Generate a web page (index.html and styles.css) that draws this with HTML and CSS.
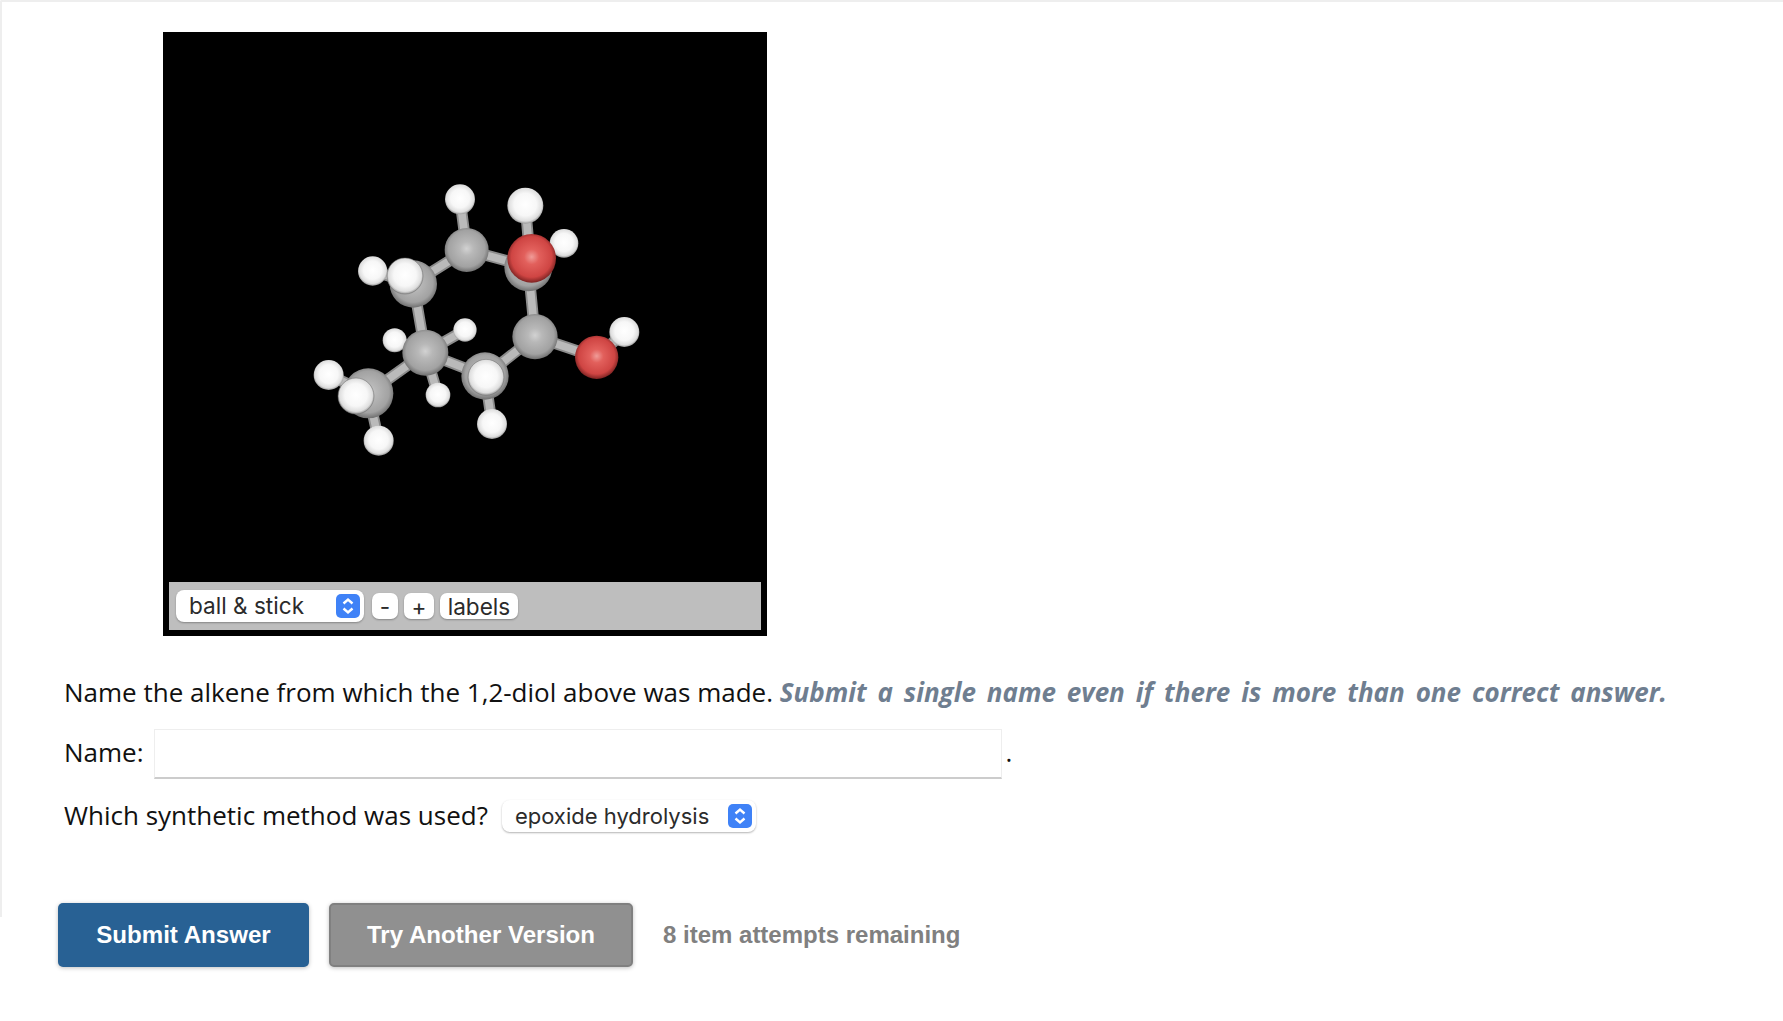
FILE: index.html
```html
<!DOCTYPE html>
<html lang="en">
<head>
<meta charset="utf-8">
<title>Question</title>
<link rel="stylesheet" href="styles.css">
</head>
<body>
<main class="panel">
  <div class="viewer">
    <div class="scene">
      <svg class="molecule" viewBox="0 0 1200 960" width="400" height="320" aria-hidden="true">
        <defs>
          <radialGradient id="gc" cx="0.5" cy="0.47" r="0.52"><stop offset="0" stop-color="#d2d2d2"/><stop offset="0.3" stop-color="#b8b8b8"/><stop offset="0.8" stop-color="#a2a2a2"/><stop offset="1" stop-color="#747474"/></radialGradient>
          <radialGradient id="gh" cx="0.5" cy="0.47" r="0.52"><stop offset="0" stop-color="#ffffff"/><stop offset="0.6" stop-color="#f7f7f7"/><stop offset="0.88" stop-color="#dedede"/><stop offset="1" stop-color="#a0a0a0"/></radialGradient>
          <radialGradient id="go" cx="0.5" cy="0.47" r="0.52"><stop offset="0" stop-color="#f09c98"/><stop offset="0.3" stop-color="#e2605c"/><stop offset="0.8" stop-color="#cf4543"/><stop offset="1" stop-color="#842625"/></radialGradient>
        </defs>
        <g class="bo">
          <path d="M540 118L560 270M736 137L750 295M852 250L755 295M278 333L400 370M400 370L560 270M560 270L745 320M745 320L765 530M400 370L436 578M436 578L265 700M436 578L615 648M615 648L765 530M765 530L950 592M950 592L1033 516M344 541L436 578M555 510L436 578M474 705L436 578M146 645L265 700M296 842L265 700M636 792L615 648"/>
        </g>
        <g class="bi">
          <path d="M540 118L560 270M736 137L750 295M852 250L755 295M278 333L400 370M400 370L560 270M560 270L745 320M745 320L765 530M400 370L436 578M436 578L265 700M436 578L615 648M615 648L765 530M765 530L950 592M950 592L1033 516M344 541L436 578M555 510L436 578M474 705L436 578M146 645L265 700M296 842L265 700M636 792L615 648"/>
        </g>
        <circle cx="344" cy="541" r="36" fill="url(#gh)"/>
        <circle cx="555" cy="510" r="35" fill="url(#gh)"/>
        <circle cx="474" cy="705" r="37" fill="url(#gh)"/>
        <circle cx="745" cy="322" r="72" fill="url(#gc)"/>
        <circle cx="560" cy="270" r="66" fill="url(#gc)"/>
        <circle cx="400" cy="372" r="71" fill="url(#gc)"/>
        <circle cx="436" cy="578" r="69" fill="url(#gc)"/>
        <circle cx="615" cy="648" r="71" fill="url(#gc)"/>
        <circle cx="765" cy="530" r="68" fill="url(#gc)"/>
        <circle cx="265" cy="700" r="75" fill="url(#gc)"/>
        <circle cx="540" cy="118" r="45" fill="url(#gh)"/>
        <circle cx="736" cy="137" r="54" fill="url(#gh)"/>
        <circle cx="852" cy="250" r="43" fill="url(#gh)"/>
        <circle cx="278" cy="333" r="44" fill="url(#gh)"/>
        <circle cx="1033" cy="516" r="45" fill="url(#gh)"/>
        <circle cx="146" cy="645" r="45" fill="url(#gh)"/>
        <circle cx="296" cy="842" r="45" fill="url(#gh)"/>
        <circle cx="636" cy="792" r="45" fill="url(#gh)"/>
        <circle class="front" cx="375" cy="348" r="54" fill="url(#gh)"/>
        <circle class="front" cx="228" cy="708" r="54" fill="url(#gh)"/>
        <circle class="front" cx="618" cy="652" r="54" fill="url(#gh)"/>
        <circle cx="755" cy="295" r="73" fill="url(#go)"/>
        <circle cx="950" cy="592" r="65" fill="url(#go)"/>
      </svg>
    </div>
    <div class="controls">
      <span class="select select-style"><span class="select-text">ball &amp; stick</span>
        <svg class="stepper" viewBox="0 0 24 24" aria-hidden="true"><rect width="24" height="24" rx="5"/><path d="M7.5 9.5L12 5.5L16.5 9.5M7.5 14.5L12 18.5L16.5 14.5"/></svg>
      </span>
      <button class="mini mini-minus" type="button">-</button>
      <button class="mini mini-plus" type="button">+</button>
      <button class="mini mini-labels" type="button">labels</button>
    </div>
  </div>
  <p class="line line-first">Name the alkene from which the 1,2-diol above was made. <em class="hint">Submit a single name even if there is more than one correct answer.</em></p>
  <p class="line line-name"><span class="label-name">Name:</span><input class="name-input" type="text" aria-label="Name"><span class="dot">.</span></p>
  <p class="line line-method"><span class="label-method">Which synthetic method was used?</span>
    <span class="select method-select">epoxide hydrolysis
      <svg class="stepper" viewBox="0 0 24 24" aria-hidden="true"><rect width="24" height="24" rx="5"/><path d="M7.5 9.5L12 5.5L16.5 9.5M7.5 14.5L12 18.5L16.5 14.5"/></svg>
    </span>
  </p>
</main>
<div class="actions">
  <button class="btn btn-submit" type="button">Submit Answer</button>
  <button class="btn btn-try" type="button">Try Another Version</button>
  <span class="attempts">8 item attempts remaining</span>
</div>
</body>
</html>
```
FILE: styles.css
```css
* { box-sizing: border-box; }
html, body { margin: 0; background: #fff; }
body { font-family: "Open Sans", "Noto Sans", sans-serif; color: #111; height: 1021px; overflow: hidden; }
.panel {
  height: 917px;
  padding: 32px 0 0 62px;
  border-top: 2px solid #eee;
  border-left: 2px solid #eee;
  border-top-left-radius: 2px;
}
.viewer { width: 604px; margin-left: 99px; margin-top: -2px; background: #000; padding: 6px; }
.scene { height: 544px; padding: 122px 0 0 111px; }
.molecule { display: block; }
.bo path { fill: none; stroke: #8c8c8c; stroke-width: 34; }
.bi path { fill: none; stroke: #bababa; stroke-width: 23; }
.front { stroke: #6a6a6a; stroke-width: 1.5; }
.controls { height: 48px; background: #bebebe; display: flex; align-items: center; gap: 6px; padding-left: 7px; }
.select {
  font-family: Inter, "Liberation Sans", sans-serif;
  color: #2b2b2b;
  background: #fff;
  border-radius: 8px;
  box-shadow: 0 1px 2px rgba(0,0,0,.3);
  display: inline-flex;
  align-items: center;
  justify-content: space-between;
}
.select-style { width: 188px; height: 32px; font-size: 22.6px; padding: 0 4px 0 13px; margin-right: 2px; }
.select-text { margin-bottom: 2px; }
.stepper { width: 24px; height: 24px; display: block; flex: none; }
.stepper rect { fill: #3f82f7; }
.stepper path { fill: none; stroke: #fff; stroke-width: 2.4; }
.mini {
  font-family: Inter, "Liberation Sans", sans-serif;
  font-size: 22.6px;
  color: #2b2b2b;
  background: #fff;
  border: 0;
  border-radius: 7px;
  height: 26px;
  padding: 0 0 2px;
  box-shadow: 0 1px 2px rgba(0,0,0,.3);
}
.mini-minus { width: 26px; }
.mini-plus { width: 30px; }
.mini-labels { width: 78px; }
.line { margin: 0; font-size: 26px; display: flex; align-items: center; }
.line-first { display: block; line-height: 36px; margin-top: 38px; white-space: nowrap; }
.hint { color: #6f7e90; font-weight: 700; font-style: italic; word-spacing: 4.15px; }
.line-name { margin-top: 19px; height: 50px; gap: 10px; }
.label-name { margin-bottom: 5px; }
.name-input { width: 848px; height: 50px; border: 1px solid #eee; border-bottom: 2px solid #ccc; background: #fff; padding: 0; outline: 0; }
.dot { margin-left: -6px; margin-bottom: 5px; }
.line-method { margin-top: 21px; height: 34px; gap: 14px; }
.label-method { margin-bottom: 4px; }
.method-select { width: 254px; height: 32px; font-size: 22px; padding: 0 4px 0 13px; margin-bottom: 2px; }
.actions { display: flex; align-items: center; padding-left: 58px; margin-top: -14px; }
.btn {
  font-family: "Liberation Sans", Arial, sans-serif;
  font-weight: 700;
  font-size: 24.1px;
  color: #fff;
  height: 64px;
  border-radius: 5px;
  padding: 0;
  box-shadow: 0 1px 4px rgba(0,0,0,.25);
}
.btn-submit { width: 251px; background: #286194; border: 0; }
.btn-try { width: 304px; margin-left: 20px; background: #909090; border: 2px solid #808080; }
.attempts { font-family: "Liberation Sans", Arial, sans-serif; font-weight: 700; font-size: 24px; color: #808080; margin-left: 30px; }
```
